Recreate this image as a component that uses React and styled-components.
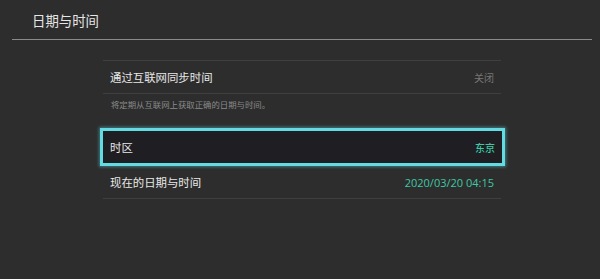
import React from "react";
import styled, { createGlobalStyle } from "styled-components";

const Global = createGlobalStyle`
  html, body { margin: 0; padding: 0; background: #2d2d2d; }
  body { font-family: "Noto Sans CJK SC", "Noto Sans", sans-serif; }
`;

const Page = styled.div`
  width: 600px;
  height: 279px;
  background: #2d2d2d;
  overflow: hidden;
`;

const Header = styled.header`
  margin: 0 8px 0 12px;
  height: 40px;
  border-bottom: 1px solid #8a8a8a;
  display: flex;
  align-items: center;
  padding-left: 20px;
  padding-top: 1px;
  box-sizing: border-box;
`;

const Title = styled.h1`
  margin: 0;
  font-size: 13.4px;
  font-weight: 400;
  color: #e6e6e6;
  letter-spacing: 0;
`;

const List = styled.div`
  width: 398px;
  margin: 20px 0 0 103px;
  display: flex;
  flex-direction: column;
`;

const Row = styled.div`
  height: 32px;
  display: flex;
  align-items: center;
  justify-content: space-between;
  padding: 0 7px;
  border-top: ${(p) => (p.$top ? "1px solid #3f3f3f" : "none")};
  border-bottom: ${(p) => (p.$bottom ? "1px solid #3f3f3f" : "none")};
`;

const Selected = styled.div`
  height: 32px;
  margin: 0 -4px 0 -3px;
  display: flex;
  align-items: center;
  justify-content: space-between;
  padding: 0 7px;
  background: #1f1e22;
  border: 3px solid #62dbe2;
  box-shadow: 0 0 3px 1px rgba(98, 219, 226, 0.45);
`;

const Label = styled.span`
  font-size: 11.4px;
  color: #e8e8e8;
`;

const Value = styled.span`
  font-size: ${(p) => p.$size || "10px"};
  color: ${(p) => (p.$accent ? "#3ec9a6" : "#777777")};
  font-weight: ${(p) => (p.$bold ? 500 : 400)};
  font-family: ${(p) => (p.$latin ? '"Open Sans", "Noto Sans CJK SC", sans-serif' : 'inherit')};
`;

const Desc = styled.div`
  height: 34px;
  padding: 4px 0 0 8px;
  box-sizing: border-box;
  font-size: 8.4px;
  color: #8a8a8a;
  line-height: 12px;
`;

export default function App() {
  return (
    <Page>
      <Global />
      <Header>
        <Title>日期与时间</Title>
      </Header>
      <List>
        <Row $top $bottom>
          <Label>通过互联网同步时间</Label>
          <Value>关闭</Value>
        </Row>
        <Desc>将定期从互联网上获取正确的日期与时间。</Desc>
        <Selected>
          <Label>时区</Label>
          <Value $accent $bold>东京</Value>
        </Selected>
        <Row $bottom>
          <Label>现在的日期与时间</Label>
          <Value $accent $latin $size="11px">2020/03/20 04:15</Value>
        </Row>
      </List>
    </Page>
  );
}
